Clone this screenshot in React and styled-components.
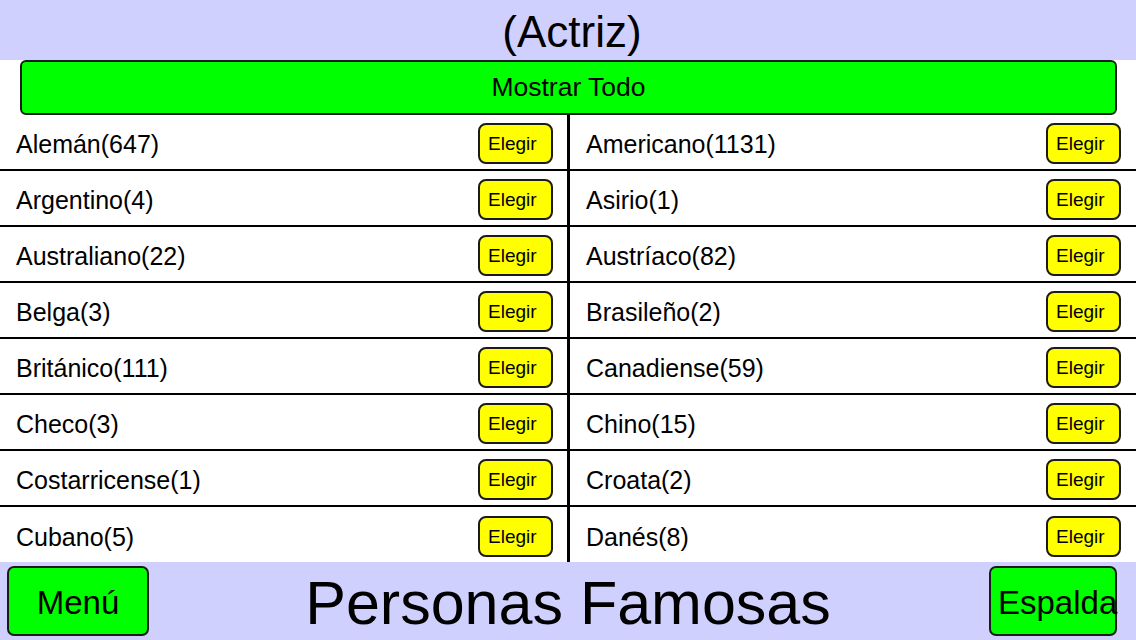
import React from 'react';
import styled, { createGlobalStyle } from 'styled-components';

const GlobalStyle = createGlobalStyle`
  html, body {
    margin: 0;
    padding: 0;
    background: #ffffff;
  }
  body {
    font-family: 'Liberation Sans', Arial, Helvetica, sans-serif;
    color: #000;
  }
`;

const Screen = styled.div`
  width: 1136px;
  height: 640px;
  display: flex;
  flex-direction: column;
  background: #ffffff;
  overflow: hidden;
`;

const TopBar = styled.header`
  box-sizing: border-box;
  height: 60px;
  padding: 3px 0 0 8px;
  background: #d0d0ff;
  display: flex;
  align-items: center;
  justify-content: center;
  font-size: 44px;
  line-height: 1;
`;

const ShowAllButton = styled.button`
  box-sizing: border-box;
  height: 55px;
  margin: 0 19px 0 20px;
  background: #00ff00;
  border: 2px solid #1a1a1a;
  border-radius: 6px;
  font-family: inherit;
  font-size: 26.5px;
  color: #000;
  cursor: pointer;
`;

const List = styled.div`
  flex: 1;
  display: grid;
  grid-template-columns: 567px 3px 1fr;
  min-height: 0;
`;

const Divider = styled.div`
  background: #000;
`;

const Column = styled.div`
  display: flex;
  flex-direction: column;
`;

const Row = styled.div`
  box-sizing: border-box;
  height: 56px;
  flex: none;
  display: flex;
  align-items: center;
  justify-content: space-between;
  padding: 0 ${({ $right }) => ($right ? '15px' : '14px')} 0 16px;
  border-bottom: ${({ $last }) => ($last ? 'none' : '2px solid #000')};
  font-size: 25px;
`;

const Label = styled.span`
  padding-top: 5px;
`;

const PickButton = styled.button`
  box-sizing: border-box;
  width: 75px;
  height: 41px;
  margin-top: 2px;
  padding: 2px 0 0 8px;
  text-align: left;
  background: #ffff00;
  border: 2px solid #1a1a1a;
  border-radius: 8px;
  font-family: inherit;
  font-size: 19px;
  color: #000;
  cursor: pointer;
`;

const BottomBar = styled.footer`
  height: 78px;
  flex: none;
  background: #d0d0ff;
  display: grid;
  grid-template-columns: 1fr auto 1fr;
  align-items: center;
`;

const NavButton = styled.button`
  box-sizing: border-box;
  height: 70px;
  width: ${({ $end }) => ($end ? '128px' : '142px')};
  padding: ${({ $end }) => ($end ? '3px 0 0 7px' : '3px 0 0 0')};
  text-align: ${({ $end }) => ($end ? 'left' : 'center')};
  white-space: nowrap;
  overflow: visible;
  justify-self: ${({ $end }) => ($end ? 'end' : 'start')};
  margin: ${({ $end }) => ($end ? '0 19px 0 0' : '0 0 0 7px')};
  background: #00ff00;
  border: 2px solid #1a1a1a;
  border-radius: 7px;
  font-family: inherit;
  font-size: 33px;
  color: #000;
  cursor: pointer;
`;

const AppTitle = styled.h1`
  margin: 4px 0 0;
  font-size: 61px;
  font-weight: normal;
  line-height: 1;
`;

const left = [
  'Alemán(647)',
  'Argentino(4)',
  'Australiano(22)',
  'Belga(3)',
  'Británico(111)',
  'Checo(3)',
  'Costarricense(1)',
  'Cubano(5)',
];

const right = [
  'Americano(1131)',
  'Asirio(1)',
  'Austríaco(82)',
  'Brasileño(2)',
  'Canadiense(59)',
  'Chino(15)',
  'Croata(2)',
  'Danés(8)',
];

function NationColumn({ items, $right }) {
  return (
    <Column>
      {items.map((name, i) => (
        <Row key={name} $right={$right} $last={i === items.length - 1}>
          <Label>{name}</Label>
          <PickButton>Elegir</PickButton>
        </Row>
      ))}
    </Column>
  );
}

export default function App() {
  return (
    <>
      <GlobalStyle />
      <Screen>
        <TopBar>(Actriz)</TopBar>
        <ShowAllButton>Mostrar Todo</ShowAllButton>
        <List>
          <NationColumn items={left} />
          <Divider />
          <NationColumn items={right} $right />
        </List>
        <BottomBar>
          <NavButton>Menú</NavButton>
          <AppTitle>Personas Famosas</AppTitle>
          <NavButton $end>Espalda</NavButton>
        </BottomBar>
      </Screen>
    </>
  );
}
